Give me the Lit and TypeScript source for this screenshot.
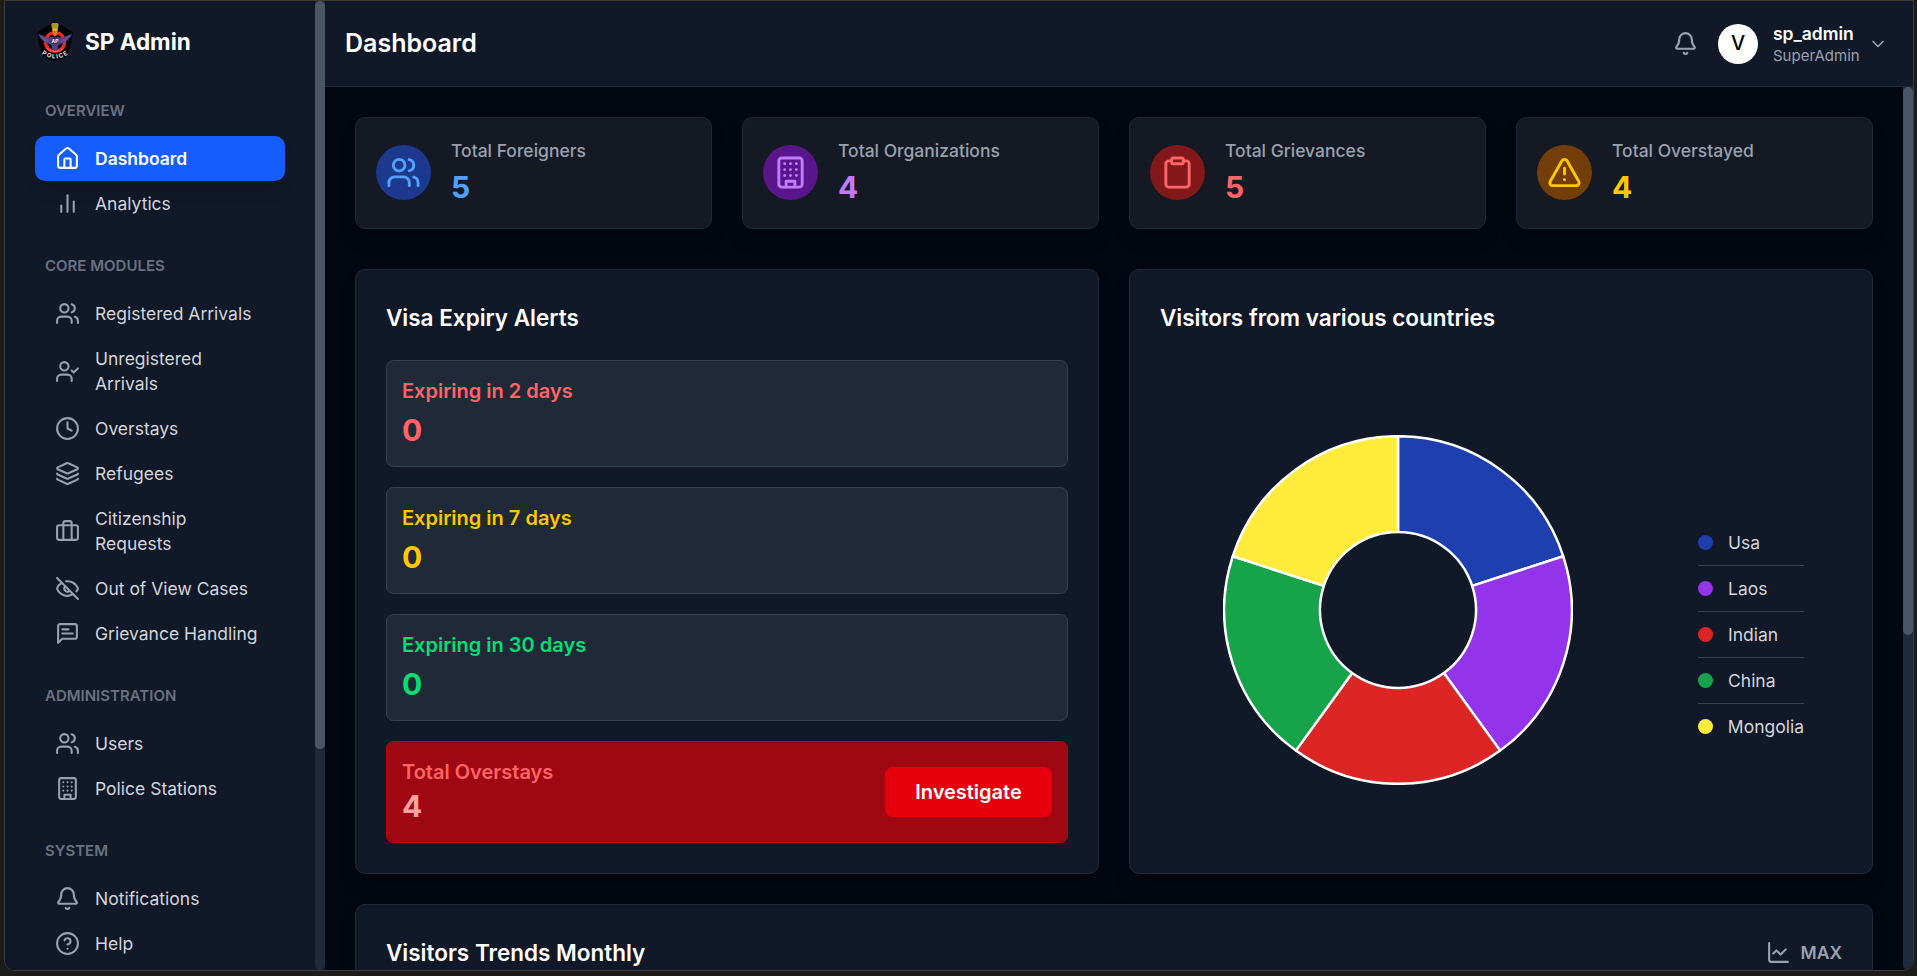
import { LitElement, html, css, svg } from "lit";
import { customElement, property } from "lit/decorators.js";

const ICONS: Record<string, unknown> = {
  home: svg`<path d="M15 21v-8a1 1 0 0 0-1-1h-4a1 1 0 0 0-1 1v8"/><path d="M3 10a2 2 0 0 1 .709-1.528l7-5.999a2 2 0 0 1 2.582 0l7 5.999A2 2 0 0 1 21 10v9a2 2 0 0 1-2 2H5a2 2 0 0 1-2-2z"/>`,
  bars: svg`<path d="M18 20V10"/><path d="M12 20V4"/><path d="M6 20v-6"/>`,
  users: svg`<path d="M16 21v-2a4 4 0 0 0-4-4H6a4 4 0 0 0-4 4v2"/><circle cx="9" cy="7" r="4"/><path d="M22 21v-2a4 4 0 0 0-3-3.87"/><path d="M16 3.13a4 4 0 0 1 0 7.75"/>`,
  userCheck: svg`<path d="M16 21v-2a4 4 0 0 0-4-4H6a4 4 0 0 0-4 4v2"/><circle cx="9" cy="7" r="4"/><path d="m16 11 2 2 4-4"/>`,
  clock: svg`<circle cx="12" cy="12" r="10"/><path d="M12 6v6l4 2"/>`,
  layers: svg`<path d="M12.83 2.18a2 2 0 0 0-1.66 0L2.6 6.08a1 1 0 0 0 0 1.83l8.58 3.91a2 2 0 0 0 1.66 0l8.58-3.9a1 1 0 0 0 0-1.83z"/><path d="M2 12a1 1 0 0 0 .58.91l8.6 3.91a2 2 0 0 0 1.65 0l8.58-3.9A1 1 0 0 0 22 12"/><path d="M2 17a1 1 0 0 0 .58.91l8.6 3.91a2 2 0 0 0 1.65 0l8.58-3.9A1 1 0 0 0 22 17"/>`,
  briefcase: svg`<path d="M16 20V4a2 2 0 0 0-2-2h-4a2 2 0 0 0-2 2v16"/><rect width="20" height="14" x="2" y="6" rx="2"/>`,
  eyeOff: svg`<path d="M10.733 5.076a10.744 10.744 0 0 1 11.205 6.575 1 1 0 0 1 0 .696 10.747 10.747 0 0 1-1.444 2.49"/><path d="M14.084 14.158a3 3 0 0 1-4.242-4.242"/><path d="M17.479 17.499a10.75 10.75 0 0 1-15.417-5.151 1 1 0 0 1 0-.696 10.75 10.75 0 0 1 4.446-5.143"/><path d="m2 2 20 20"/>`,
  message: svg`<path d="M21 15a2 2 0 0 1-2 2H7l-4 4V5a2 2 0 0 1 2-2h14a2 2 0 0 1 2 2z"/><path d="M13 8H7"/><path d="M17 12H7"/>`,
  building: svg`<rect width="16" height="20" x="4" y="2" rx="2"/><path d="M9 22v-4h6v4"/><path d="M8 6h.01M12 6h.01M16 6h.01M8 10h.01M12 10h.01M16 10h.01M8 14h.01M12 14h.01M16 14h.01"/>`,
  bell: svg`<path d="M10.268 21a2 2 0 0 0 3.464 0"/><path d="M3.262 15.326A1 1 0 0 0 4 17h16a1 1 0 0 0 .74-1.673C19.41 13.956 18 12.499 18 8A6 6 0 0 0 6 8c0 4.499-1.411 5.956-2.738 7.326"/>`,
  help: svg`<circle cx="12" cy="12" r="10"/><path d="M9.09 9a3 3 0 0 1 5.83 1c0 2-3 3-3 3"/><path d="M12 17h.01"/>`,
  clipboard: svg`<rect width="8" height="4" x="8" y="2" rx="1"/><path d="M16 4h2a2 2 0 0 1 2 2v14a2 2 0 0 1-2 2H6a2 2 0 0 1-2-2V6a2 2 0 0 1 2-2h2"/>`,
  alert: svg`<path d="m21.73 18-8-14a2 2 0 0 0-3.48 0l-8 14A2 2 0 0 0 4 21h16a2 2 0 0 0 1.73-3"/><path d="M12 9v4"/><path d="M12 17h.01"/>`,
  chevron: svg`<path d="m6 9 6 6 6-6"/>`,
  chart: svg`<path d="M3 3v16a2 2 0 0 0 2 2h16"/><path d="m19 9-5 5-4-4-3 3"/>`,
};

@customElement("ui-icon")
class UiIcon extends LitElement {
  @property() name = "";
  @property({ type: Number }) weight = 2;
  static styles = css`
    :host { display: block; width: 25px; height: 25px; flex: none; }
    .glyph { display: block; width: 100%; height: 100%; fill: none; stroke: currentColor; stroke-linecap: round; stroke-linejoin: round; }
  `;
  render() {
    return html`<svg class="glyph" viewBox="0 0 24 24" stroke-width=${this.weight}>${ICONS[this.name]}</svg>`;
  }
}

@customElement("police-crest")
class PoliceCrest extends LitElement {
  static styles = css`
    :host { display: block; width: 40px; height: 40px; flex: none; }
    .crest { display: block; width: 40px; height: 40px; }
    .ap { font: 700 5px Inter, sans-serif; fill: #f3f0fa; }
    .police { font: 700 6px Inter, sans-serif; fill: #e8e8e8; letter-spacing: 1.3px; }
  `;
  render() {
    return html`<svg class="crest" viewBox="0 0 40 40">
      <path d="M20 0.3 L36.6 10.4 Q38 11.5 37.8 13 Q36.5 24 32.5 33.5 Q28 39.5 20 39.7 Q12 39.5 7.5 33.5 Q3.500 24 2.200 13 Q2 11.500 3.400 10.400 Z" fill="#020203"/>
      <circle cx="20" cy="21" r="9.500" fill="none" stroke="#ee2b26" stroke-width="3.200"/>
      <path d="M11.500 27.500 Q20 33.500 28.500 27.500" fill="none" stroke="#f08a80" stroke-width="0.700"/>
      <path d="M2.800 12.500 L13 17 L17.500 15.500 L20 17 L22.500 15.500 L27 17 L37.200 12.500 Q34 20.500 26.500 22.800 L23.500 24 L23 28 L20 29.500 L17 28 L16.500 24 L13.500 22.800 Q6 20.500 2.800 12.500 Z" fill="#53408a"/>
      <path d="M5 15 L12.500 19 M35 15 L27.500 19 M8 18.500 L14 21 M32 18.500 L26 21" stroke="#8774b4" stroke-width="0.600"/>
      <rect x="16.500" y="2" width="7" height="5" rx="1.200" fill="#a89a20"/>
      <rect x="17.300" y="7" width="5.400" height="3.200" fill="#d7b72a"/>
      <path d="M17.500 10.200h5v3.500l-2.500 1.800l-2.500-1.800z" fill="#ed6a22"/>
      <circle cx="20" cy="20" r="3.700" fill="#3e2f73"/>
      <text class="ap" x="20" y="21.800" text-anchor="middle">AP</text>
      <path id="arc" d="M5.500 31.500 Q20 43.500 35.500 31.500" fill="none"/>
      <text class="police"><textPath href="#arc" startOffset="50%" text-anchor="middle">POLICE</textPath></text>
    </svg>`;
  }
}

const NAV = [
  { title: "OVERVIEW", items: [["home", "Dashboard"], ["bars", "Analytics"]] },
  {
    title: "CORE MODULES",
    items: [
      ["users", "Registered Arrivals"],
      ["userCheck", "Unregistered Arrivals"],
      ["clock", "Overstays"],
      ["layers", "Refugees"],
      ["briefcase", "Citizenship Requests"],
      ["eyeOff", "Out of View Cases"],
      ["message", "Grievance Handling"],
    ],
  },
  { title: "ADMINISTRATION", items: [["users", "Users"], ["building", "Police Stations"]] },
  { title: "SYSTEM", items: [["bell", "Notifications"], ["help", "Help"]] },
];

const STATS = [
  { icon: "users", label: "Total Foreigners", value: 5, tone: "blue" },
  { icon: "building", label: "Total Organizations", value: 4, tone: "purple" },
  { icon: "clipboard", label: "Total Grievances", value: 5, tone: "red" },
  { icon: "alert", label: "Total Overstayed", value: 4, tone: "amber" },
];

const ALERTS = [
  { label: "Expiring in 2 days", value: 0, tone: "t-red" },
  { label: "Expiring in 7 days", value: 0, tone: "t-yellow" },
  { label: "Expiring in 30 days", value: 0, tone: "t-green" },
];

const COUNTRIES = [
  { name: "Usa", color: "#1e40af", value: 1 },
  { name: "Laos", color: "#9333ea", value: 1 },
  { name: "Indian", color: "#dc2626", value: 1 },
  { name: "China", color: "#16a34a", value: 1 },
  { name: "Mongolia", color: "#ffeb3b", value: 1 },
];

const OUTER = 173.8;
const INNER = 78;
const HALF = 175;

function slices() {
  const total = COUNTRIES.reduce((s, c) => s + c.value, 0);
  let at = 0;
  return COUNTRIES.map((c) => {
    const a = (at / total) * Math.PI * 2;
    at += c.value;
    const b = (at / total) * Math.PI * 2;
    const p = (r: number, t: number) =>
      `${(HALF + r * Math.sin(t)).toFixed(2)} ${(HALF - r * Math.cos(t)).toFixed(2)}`;
    const d = `M${p(OUTER, a)}A${OUTER} ${OUTER} 0 0 1 ${p(OUTER, b)}L${p(INNER, b)}A${INNER} ${INNER} 0 0 0 ${p(INNER, a)}Z`;
    return svg`<path d=${d} fill=${c.color} stroke="#fff" stroke-width="2.500" stroke-linejoin="bevel"/>`;
  });
}

@customElement("app-root")
class AppRoot extends LitElement {
  static styles = css`
    :host {
      display: block; box-sizing: border-box; width: 100%; height: 976px; padding: 0 3px 5px 4px;
      background: #1c1c1a; overflow: hidden;
      font-family: Inter, "Noto Sans", sans-serif; font-size: 17.5px; line-height: 25px; color: #fff;
    }
    *, *::before, *::after { box-sizing: border-box; }
    h1, h2, h3, p { margin: 0; font: inherit; }
    .window { display: flex; height: 971px; border: 1px solid #3b3c3b; border-radius: 0 0 11px 11px; overflow: hidden; background: #030712; }
    .sidebar { width: 320px; flex: none; display: flex; background: #111827; }
    .side-body { flex: 1; padding: 20px 30px 0; overflow: hidden; }
    .track { width: 10px; flex: none; background: #1e2939; border-radius: 0 0 5px 5px; }
    .thumb { width: 10px; background: #4a5565; border-radius: 5px; }
    .side-thumb { height: 748px; }
    .main-thumb { height: 548px; }
    .brand { display: flex; align-items: center; gap: 10px; height: 40px; }
    .brand-name { font-size: 22.5px; line-height: 35px; font-weight: 700; }
    .brand + .section .heading { margin-top: 40px; }
    .heading { margin: 30px 0 15px 10px; font-size: 15px; line-height: 20px; font-weight: 600; color: #6a7282; }
    .item { display: flex; align-items: center; gap: 15px; padding: 10px 20px; border-radius: 10px; color: #d1d5dc; }
    .item ui-icon { color: #99a1af; }
    .item.active { background: #155dfc; color: #fff; font-weight: 600; box-shadow: 0 12px 18px -4px rgba(0,0,0,.1); }
    .item.active ui-icon { color: #fff; }
    .page { flex: 1; display: flex; flex-direction: column; min-width: 0; }
    .topbar { height: 86px; flex: none; display: flex; align-items: center; padding: 0 25px 0 20px; background: #111827; border-bottom: 1px solid #1e2939; }
    .page-title { flex: 1; font-size: 25px; line-height: 35px; font-weight: 600; }
    .topbar .bell { color: #99a1af; margin-right: 20px; }
    .avatar { width: 40px; height: 40px; border-radius: 50%; background: #fff; color: #000; display: grid; place-items: center; font-size: 20px; font-weight: 500; margin-right: 15px; }
    .who { width: 86px; margin-right: 9px; padding-top: 2px; }
    .name { font-weight: 600; line-height: 22px; white-space: nowrap; }
    .role { font-size: 15px; line-height: 22px; color: #99a1af; }
    .chevron { width: 20px; height: 20px; color: #99a1af; }
    .scroller { flex: 1; min-height: 0; display: flex; }
    .content { flex: 1; min-width: 0; padding: 30px 30px 0; overflow: hidden; }
    .card { border: 1px solid #1e2939; border-radius: 10px; background: #111827; box-shadow: 0 12px 18px -4px rgba(0,0,0,.3); }
    .stats { display: grid; grid-template-columns: repeat(4, 1fr); gap: 30px; margin-bottom: 40px; }
    .stat { display: flex; align-items: center; gap: 20px; height: 112px; padding: 20px 20px 21px; background: #151923; }
    .badge { width: 55px; height: 55px; border-radius: 50%; display: grid; place-items: center; flex: none; }
    .badge ui-icon { width: 35px; height: 35px; }
    .stat-label { color: #99a1af; margin-bottom: 4px; font-weight: 500; }
    .big { font-size: 30px; line-height: 40px; font-weight: 700; }
    .blue .badge { background: #1c398e; } .blue .badge, .blue .big { color: #51a2ff; }
    .purple .badge { background: #59168b; } .purple .badge, .purple .big { color: #c27aff; }
    .red .badge { background: #82181a; } .red .badge, .red .big { color: #ff6467; }
    .amber .badge { background: #733e0a; } .amber .badge, .amber .big { color: #fdc700; }
    .panels { display: grid; grid-template-columns: 1fr 1fr; gap: 30px; height: 605px; margin-bottom: 30px; }
    .panel { padding: 30px; }
    .panel-title { font-size: 22.5px; line-height: 35px; font-weight: 600; }
    .alerts { display: flex; flex-direction: column; gap: 20px; margin-top: 25px; }
    .alert { height: 107px; padding: 15px; border: 1px solid #364153; border-radius: 7.5px; background: #1f2937; }
    .alert-label { font-size: 20px; line-height: 30px; font-weight: 600; }
    .alert .big { margin-top: 4px; }
    .t-red { color: #ff6467; } .t-yellow { color: #fdc700; } .t-green { color: #05df72; }
    .overstays { height: 102px; padding: 15px; border: 1px solid #c10007; border-radius: 7.5px; background: #9f0712; color: #ff6467; display: flex; align-items: center; justify-content: space-between; }
    .overstays .big { color: #ffa2a2; line-height: 38px; margin-bottom: 2px; }
    .investigate { border: 0; height: 50px; width: 167px; border-radius: 7.5px; background: #e7000b; color: #fff; font: 600 20px/30px Inter, sans-serif; }
    .chart-row { display: flex; align-items: flex-start; padding: 100px 0 0 63px; }
    .donut { width: 350px; height: 350px; flex: none; display: block; }
    .legend { margin: 85px 0 0 125px; width: 106px; color: #d1d5dc; }
    .entry { display: flex; align-items: center; gap: 15px; height: 46px; border-bottom: 1px solid #364153; }
    .entry:last-child { border-bottom: 0; height: 45px; }
    .dot { width: 15px; height: 15px; border-radius: 50%; }
    .trends { display: flex; justify-content: space-between; align-items: flex-start; height: 300px; }
    .range { display: flex; align-items: center; gap: 10px; height: 35px; color: #99a1af; font-weight: 600; }
  `;
  render() {
    return html`
      <div class="window">
        <aside class="sidebar">
          <div class="side-body">
            <div class="brand"><police-crest></police-crest><span class="brand-name">SP Admin</span></div>
            ${NAV.map(
              (s) => html`<div class="section">
                <h3 class="heading">${s.title}</h3>
                ${s.items.map(
                  ([icon, label]) => html`<div class="item ${label === "Dashboard" ? "active" : ""}">
                    <ui-icon name=${icon}></ui-icon><span>${label}</span>
                  </div>`
                )}
              </div>`
            )}
          </div>
          <div class="track"><div class="thumb side-thumb"></div></div>
        </aside>
        <section class="page">
          <header class="topbar">
            <h1 class="page-title">Dashboard</h1>
            <ui-icon class="bell" name="bell"></ui-icon>
            <div class="avatar">V</div>
            <div class="who"><div class="name">sp_admin</div><div class="role">SuperAdmin</div></div>
            <ui-icon class="chevron" name="chevron"></ui-icon>
          </header>
          <div class="scroller">
            <main class="content">
              <div class="stats">
                ${STATS.map(
                  (s) => html`<div class="card stat ${s.tone}">
                    <div class="badge"><ui-icon name=${s.icon}></ui-icon></div>
                    <div><p class="stat-label">${s.label}</p><p class="big">${s.value}</p></div>
                  </div>`
                )}
              </div>
              <div class="panels">
                <div class="card panel">
                  <h2 class="panel-title">Visa Expiry Alerts</h2>
                  <div class="alerts">
                    ${ALERTS.map(
                      (a) => html`<div class="alert ${a.tone}"><p class="alert-label">${a.label}</p><p class="big">${a.value}</p></div>`
                    )}
                    <div class="overstays">
                      <div><p class="alert-label">Total Overstays</p><p class="big">4</p></div>
                      <button class="investigate">Investigate</button>
                    </div>
                  </div>
                </div>
                <div class="card panel">
                  <h2 class="panel-title">Visitors from various countries</h2>
                  <div class="chart-row">
                    <svg class="donut" viewBox="0 0 350 350">${slices()}</svg>
                    <div class="legend">
                      ${COUNTRIES.map(
                        (c) => html`<div class="entry"><span class="dot" style="background:${c.color}"></span><span>${c.name}</span></div>`
                      )}
                    </div>
                  </div>
                </div>
              </div>
              <div class="card panel trends">
                <h2 class="panel-title">Visitors Trends Monthly</h2>
                <div class="range"><ui-icon name="chart"></ui-icon><span>MAX</span></div>
              </div>
            </main>
            <div class="track"><div class="thumb main-thumb"></div></div>
          </div>
        </section>
      </div>
    `;
  }
}
